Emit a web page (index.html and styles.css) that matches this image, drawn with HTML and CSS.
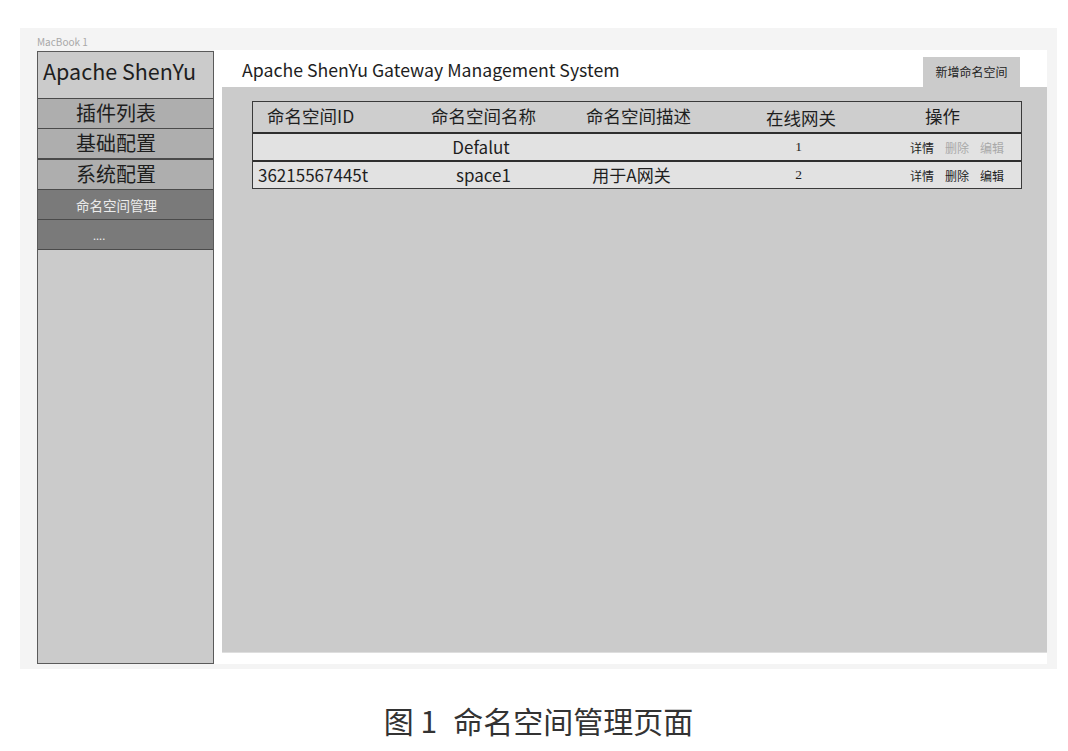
FILE: index.html
```html
<!DOCTYPE html>
<html lang="zh-CN">
<head>
<meta charset="utf-8">
<title>命名空间管理页面</title>
<link rel="stylesheet" href="styles.css">
</head>
<body>
<div class="figure">
  <div class="frame">
    <div class="frame-label">MacBook 1</div>
    <div class="frame-body">
      <aside class="sidebar">
        <div class="brand">Apache ShenYu</div>
        <div class="menu-item">插件列表</div>
        <div class="menu-item">基础配置</div>
        <div class="menu-item menu-item-sep">系统配置</div>
        <div class="menu-item sub">命名空间管理</div>
        <div class="menu-item sub dots">....</div>
      </aside>
      <main class="main">
        <div class="topbar">
          <div class="title">Apache ShenYu Gateway Management System</div>
          <div class="add-btn">新增命名空间</div>
        </div>
        <div class="content">
          <div class="table">
            <div class="row head">
              <div class="cell c1 left">命名空间ID</div>
              <div class="cell c2">命名空间名称</div>
              <div class="cell c3">命名空间描述</div>
              <div class="cell c4 low">在线网关</div>
              <div class="cell c5">操作</div>
            </div>
            <div class="row">
              <div class="cell c1 left"></div>
              <div class="cell c2 shift">Defalut</div>
              <div class="cell c3"></div>
              <div class="cell c4 num">1</div>
              <div class="cell c5 ops"><span>详情</span><span class="off">删除</span><span class="off">编辑</span></div>
            </div>
            <div class="row">
              <div class="cell c1 left id">36215567445t</div>
              <div class="cell c2">space1</div>
              <div class="cell c3 desc">用于A网关</div>
              <div class="cell c4 num">2</div>
              <div class="cell c5 ops"><span>详情</span><span>删除</span><span>编辑</span></div>
            </div>
          </div>
        </div>
      </main>
    </div>
  </div>
  <div class="caption">图 <span class="fig-num">1</span>命名空间管理页面</div>
</div>
</body>
</html>
```
FILE: styles.css
```css
* { box-sizing: border-box; }
html, body { margin: 0; padding: 0; background: #ffffff; }
body {
  font-family: "Noto Sans CJK SC", "Noto Sans", sans-serif;
  color: #222;
  width: 1068px;
  height: 751px;
  overflow: hidden;
}
.figure { padding: 28px 11px 0 20px; }
.frame {
  background: #f4f4f4;
  height: 641px;
  padding: 0 10px 5px 17px;
  display: flex;
  flex-direction: column;
}
.frame-label {
  height: 22px;
  padding-top: 8px;
  font-size: 10px;
  line-height: 12px;
  color: #a8a8a8;
}
.frame-body { flex: 1; display: flex; align-items: stretch; }
.sidebar {
  width: 177px;
  margin-top: 1px;
  background: #cbcbcb;
  border: 1px solid #5a5a5a;
  display: flex;
  flex-direction: column;
}
.brand {
  height: 47px;
  font-size: 21.5px;
  line-height: 38px;
  padding-left: 5px;
  color: #1e1e1e;
  border-bottom: 1px solid #4a4a4a;
}
.menu-item {
  height: 30px;
  background: #aeaeae;
  border-bottom: 1px solid #4a4a4a;
  font-size: 20px;
  line-height: 28px;
  padding-left: 38px;
  color: #1e1e1e;
}
.menu-item-sep { border-top: 1px solid #4a4a4a; height: 31px; }
.menu-item.sub {
  background: #7a7a7a;
  color: #ececec;
  font-size: 13.5px;
  line-height: 30px;
}
.menu-item.dots { padding-left: 55px; font-size: 11px; line-height: 30px; }
.main {
  flex: 1;
  background: #ffffff;
  display: flex;
  flex-direction: column;
  padding-bottom: 11px;
}
.topbar {
  height: 37px;
  display: flex;
  align-items: flex-start;
  justify-content: space-between;
  padding: 0 27px 0 28px;
}
.title {
  font-size: 17.7px;
  line-height: 20px;
  margin-top: 9px;
  color: #1e1e1e;
}
.add-btn {
  margin-top: 7px;
  width: 97px;
  height: 30px;
  background: #cbcbcb;
  font-size: 12px;
  line-height: 30px;
  text-align: center;
  color: #1e1e1e;
}
.content {
  flex: 1;
  margin-left: 8px;
  background: #cbcbcb;
  padding: 14px 0 0 30px;
  border-bottom: 1px solid #dedede;
}
.table {
  width: 770px;
  border: 1px solid #3a3a3a;
}
.row {
  display: flex;
  height: 28px;
  background: #e2e2e2;
  border-top: 2px solid #2e2e2e;
  align-items: center;
  padding-bottom: 2px;
}
.row.head {
  height: 30px;
  background: #cecece;
  border-top: none;
  padding-bottom: 3px;
}
.cell {
  text-align: center;
  font-size: 17px;
  color: #1e1e1e;
  white-space: nowrap;
}
.head .cell { font-size: 17.5px; }
.c1 { width: 158px; }
.c2 { width: 145px; }
.c3 { width: 165px; }
.c4 { width: 160px; }
.c5 { flex: 1; padding-right: 17px; }
.head .c1 { padding-left: 14px; }
.cell.left { text-align: left; }
.cell.id { padding-left: 5px; }
.cell.shift { padding-right: 5px; }
.cell.desc { padding-right: 14px; }
.head .low { padding-top: 4px; }
.cell.num {
  font-family: "Liberation Serif", "DejaVu Serif", serif;
  font-size: 13.5px;
  padding-right: 5px;
  padding-top: 2px;
}
.cell.ops {
  display: flex;
  justify-content: flex-end;
  gap: 11px;
  font-size: 12px;
  padding-top: 2px;
}
.ops .off { color: #a9a9a9; }
.caption {
  margin-top: 33px;
  text-align: center;
  font-size: 30px;
  line-height: 36px;
  color: #333;
}
.fig-num { margin-right: 16px; }
```
